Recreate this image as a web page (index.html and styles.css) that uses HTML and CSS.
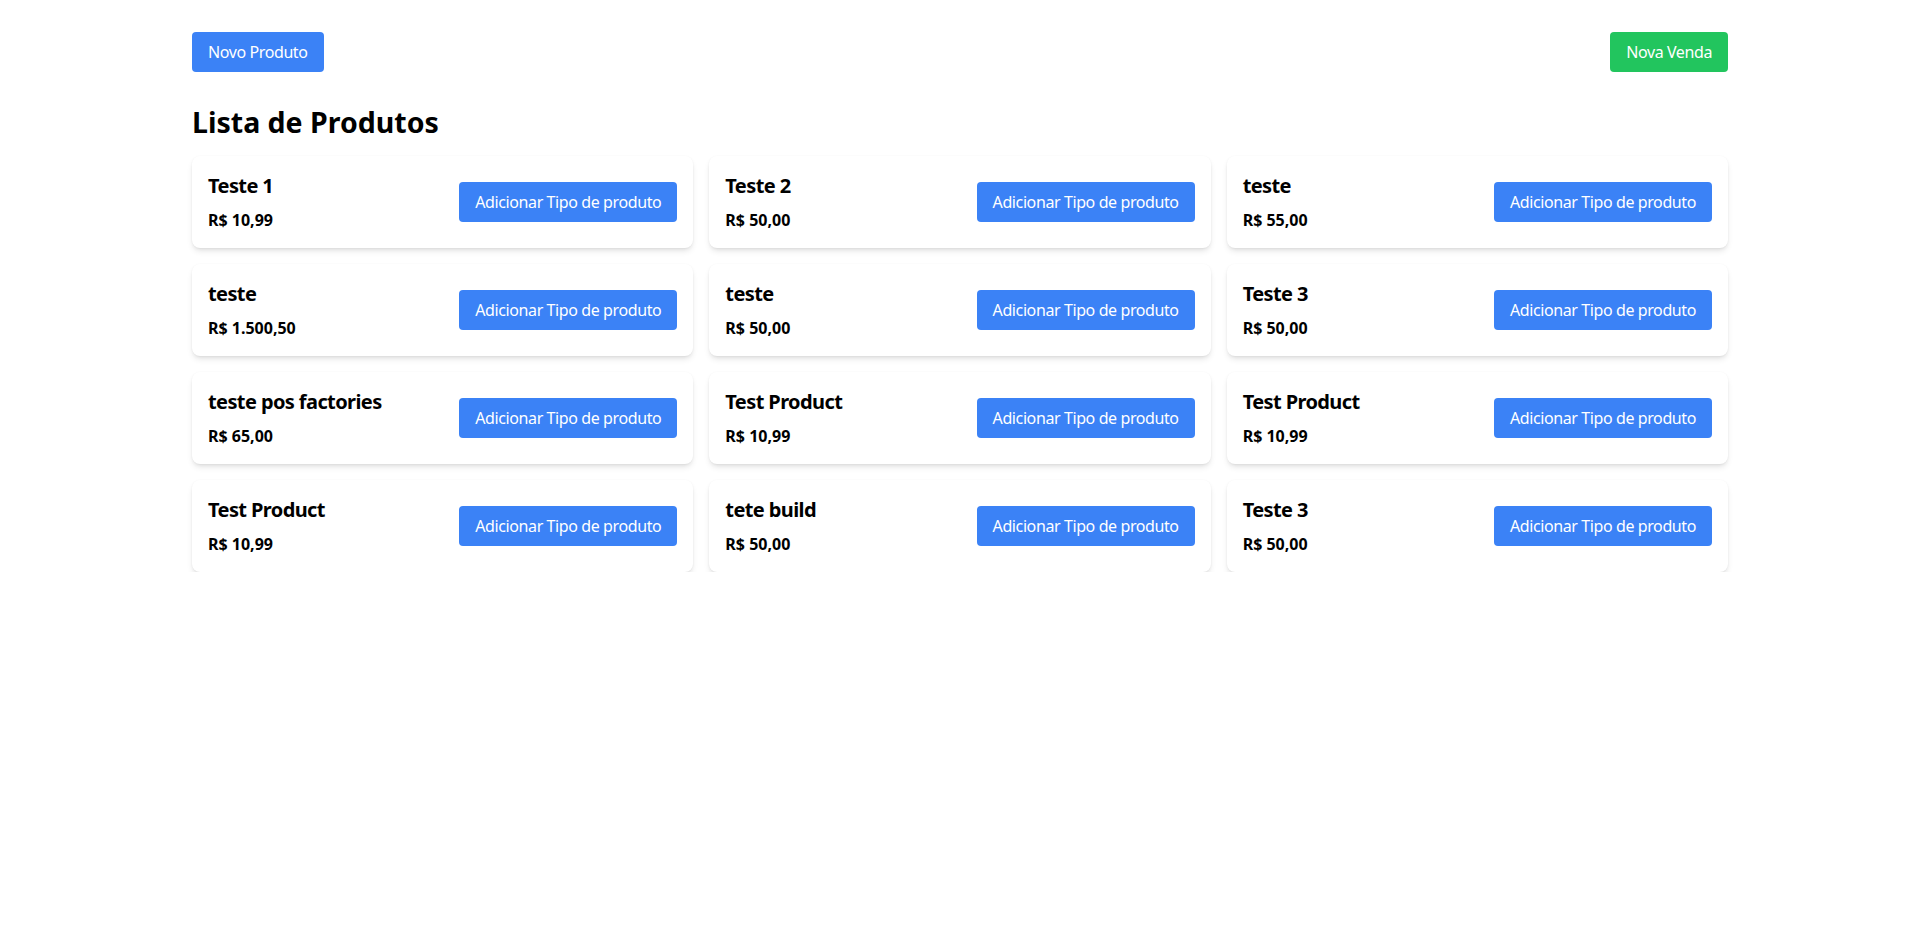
FILE: index.html
```html
<!DOCTYPE html>
<html lang="pt-BR">
<head>
<meta charset="utf-8">
<title>Lista de Produtos</title>
<link rel="stylesheet" href="styles.css">
</head>
<body>
<div class="container">
  <div class="toolbar">
    <button class="btn btn-blue">Novo Produto</button>
    <button class="btn btn-green">Nova Venda</button>
  </div>
  <h1 class="heading">Lista de Produtos</h1>
  <div class="grid">
    <div class="card"><div class="info"><div class="name">Teste 1</div><div class="price">R$ 10,99</div></div><button class="btn btn-blue">Adicionar Tipo de produto</button></div>
    <div class="card"><div class="info"><div class="name">Teste 2</div><div class="price">R$ 50,00</div></div><button class="btn btn-blue">Adicionar Tipo de produto</button></div>
    <div class="card"><div class="info"><div class="name">teste</div><div class="price">R$ 55,00</div></div><button class="btn btn-blue">Adicionar Tipo de produto</button></div>
    <div class="card"><div class="info"><div class="name">teste</div><div class="price">R$ 1.500,50</div></div><button class="btn btn-blue">Adicionar Tipo de produto</button></div>
    <div class="card"><div class="info"><div class="name">teste</div><div class="price">R$ 50,00</div></div><button class="btn btn-blue">Adicionar Tipo de produto</button></div>
    <div class="card"><div class="info"><div class="name">Teste 3</div><div class="price">R$ 50,00</div></div><button class="btn btn-blue">Adicionar Tipo de produto</button></div>
    <div class="card"><div class="info"><div class="name">teste pos factories</div><div class="price">R$ 65,00</div></div><button class="btn btn-blue">Adicionar Tipo de produto</button></div>
    <div class="card"><div class="info"><div class="name">Test Product</div><div class="price">R$ 10,99</div></div><button class="btn btn-blue">Adicionar Tipo de produto</button></div>
    <div class="card"><div class="info"><div class="name">Test Product</div><div class="price">R$ 10,99</div></div><button class="btn btn-blue">Adicionar Tipo de produto</button></div>
    <div class="card"><div class="info"><div class="name">Test Product</div><div class="price">R$ 10,99</div></div><button class="btn btn-blue">Adicionar Tipo de produto</button></div>
    <div class="card"><div class="info"><div class="name">tete build</div><div class="price">R$ 50,00</div></div><button class="btn btn-blue">Adicionar Tipo de produto</button></div>
    <div class="card"><div class="info"><div class="name">Teste 3</div><div class="price">R$ 50,00</div></div><button class="btn btn-blue">Adicionar Tipo de produto</button></div>
  </div>
</div>
</body>
</html>
```

FILE: styles.css
```css
* { box-sizing: border-box; }
html, body { margin: 0; padding: 0; background: #ffffff; }
body {
  font-family: "Noto Sans", "Open Sans", sans-serif;
  color: #000000;
}
.container {
  max-width: 1536px;
  margin: 0 auto;
  padding-top: 32px;
}
.toolbar {
  display: flex;
  justify-content: space-between;
  align-items: center;
  margin-bottom: 32px;
}
.btn {
  font-family: inherit;
  font-size: 16px;
  line-height: 24px;
  letter-spacing: -0.4px;
  padding: 8px 16px;
  border: none;
  border-radius: 4px;
  color: #ffffff;
  cursor: pointer;
}
.btn-blue { background: #3b82f6; }
.btn-green { background: #22c55e; }
.heading {
  font-size: 28.5px;
  line-height: 36px;
  font-weight: 700;
  margin: 0 0 16px 0;
}
.grid {
  display: grid;
  grid-template-columns: repeat(3, 1fr);
  gap: 16px;
}
.card {
  display: flex;
  justify-content: space-between;
  align-items: center;
  padding: 16px;
  background: #ffffff;
  border-radius: 8px;
  box-shadow: 0 4px 6px -1px rgba(0,0,0,0.1), 0 2px 4px -2px rgba(0,0,0,0.1), 0 0 2px rgba(0,0,0,0.04);
}
.name {
  font-size: 20px;
  line-height: 28px;
  font-weight: 700;
  letter-spacing: -0.6px;
}
.price {
  font-size: 16px;
  line-height: 24px;
  font-weight: 700;
  margin-top: 8px;
}
```
